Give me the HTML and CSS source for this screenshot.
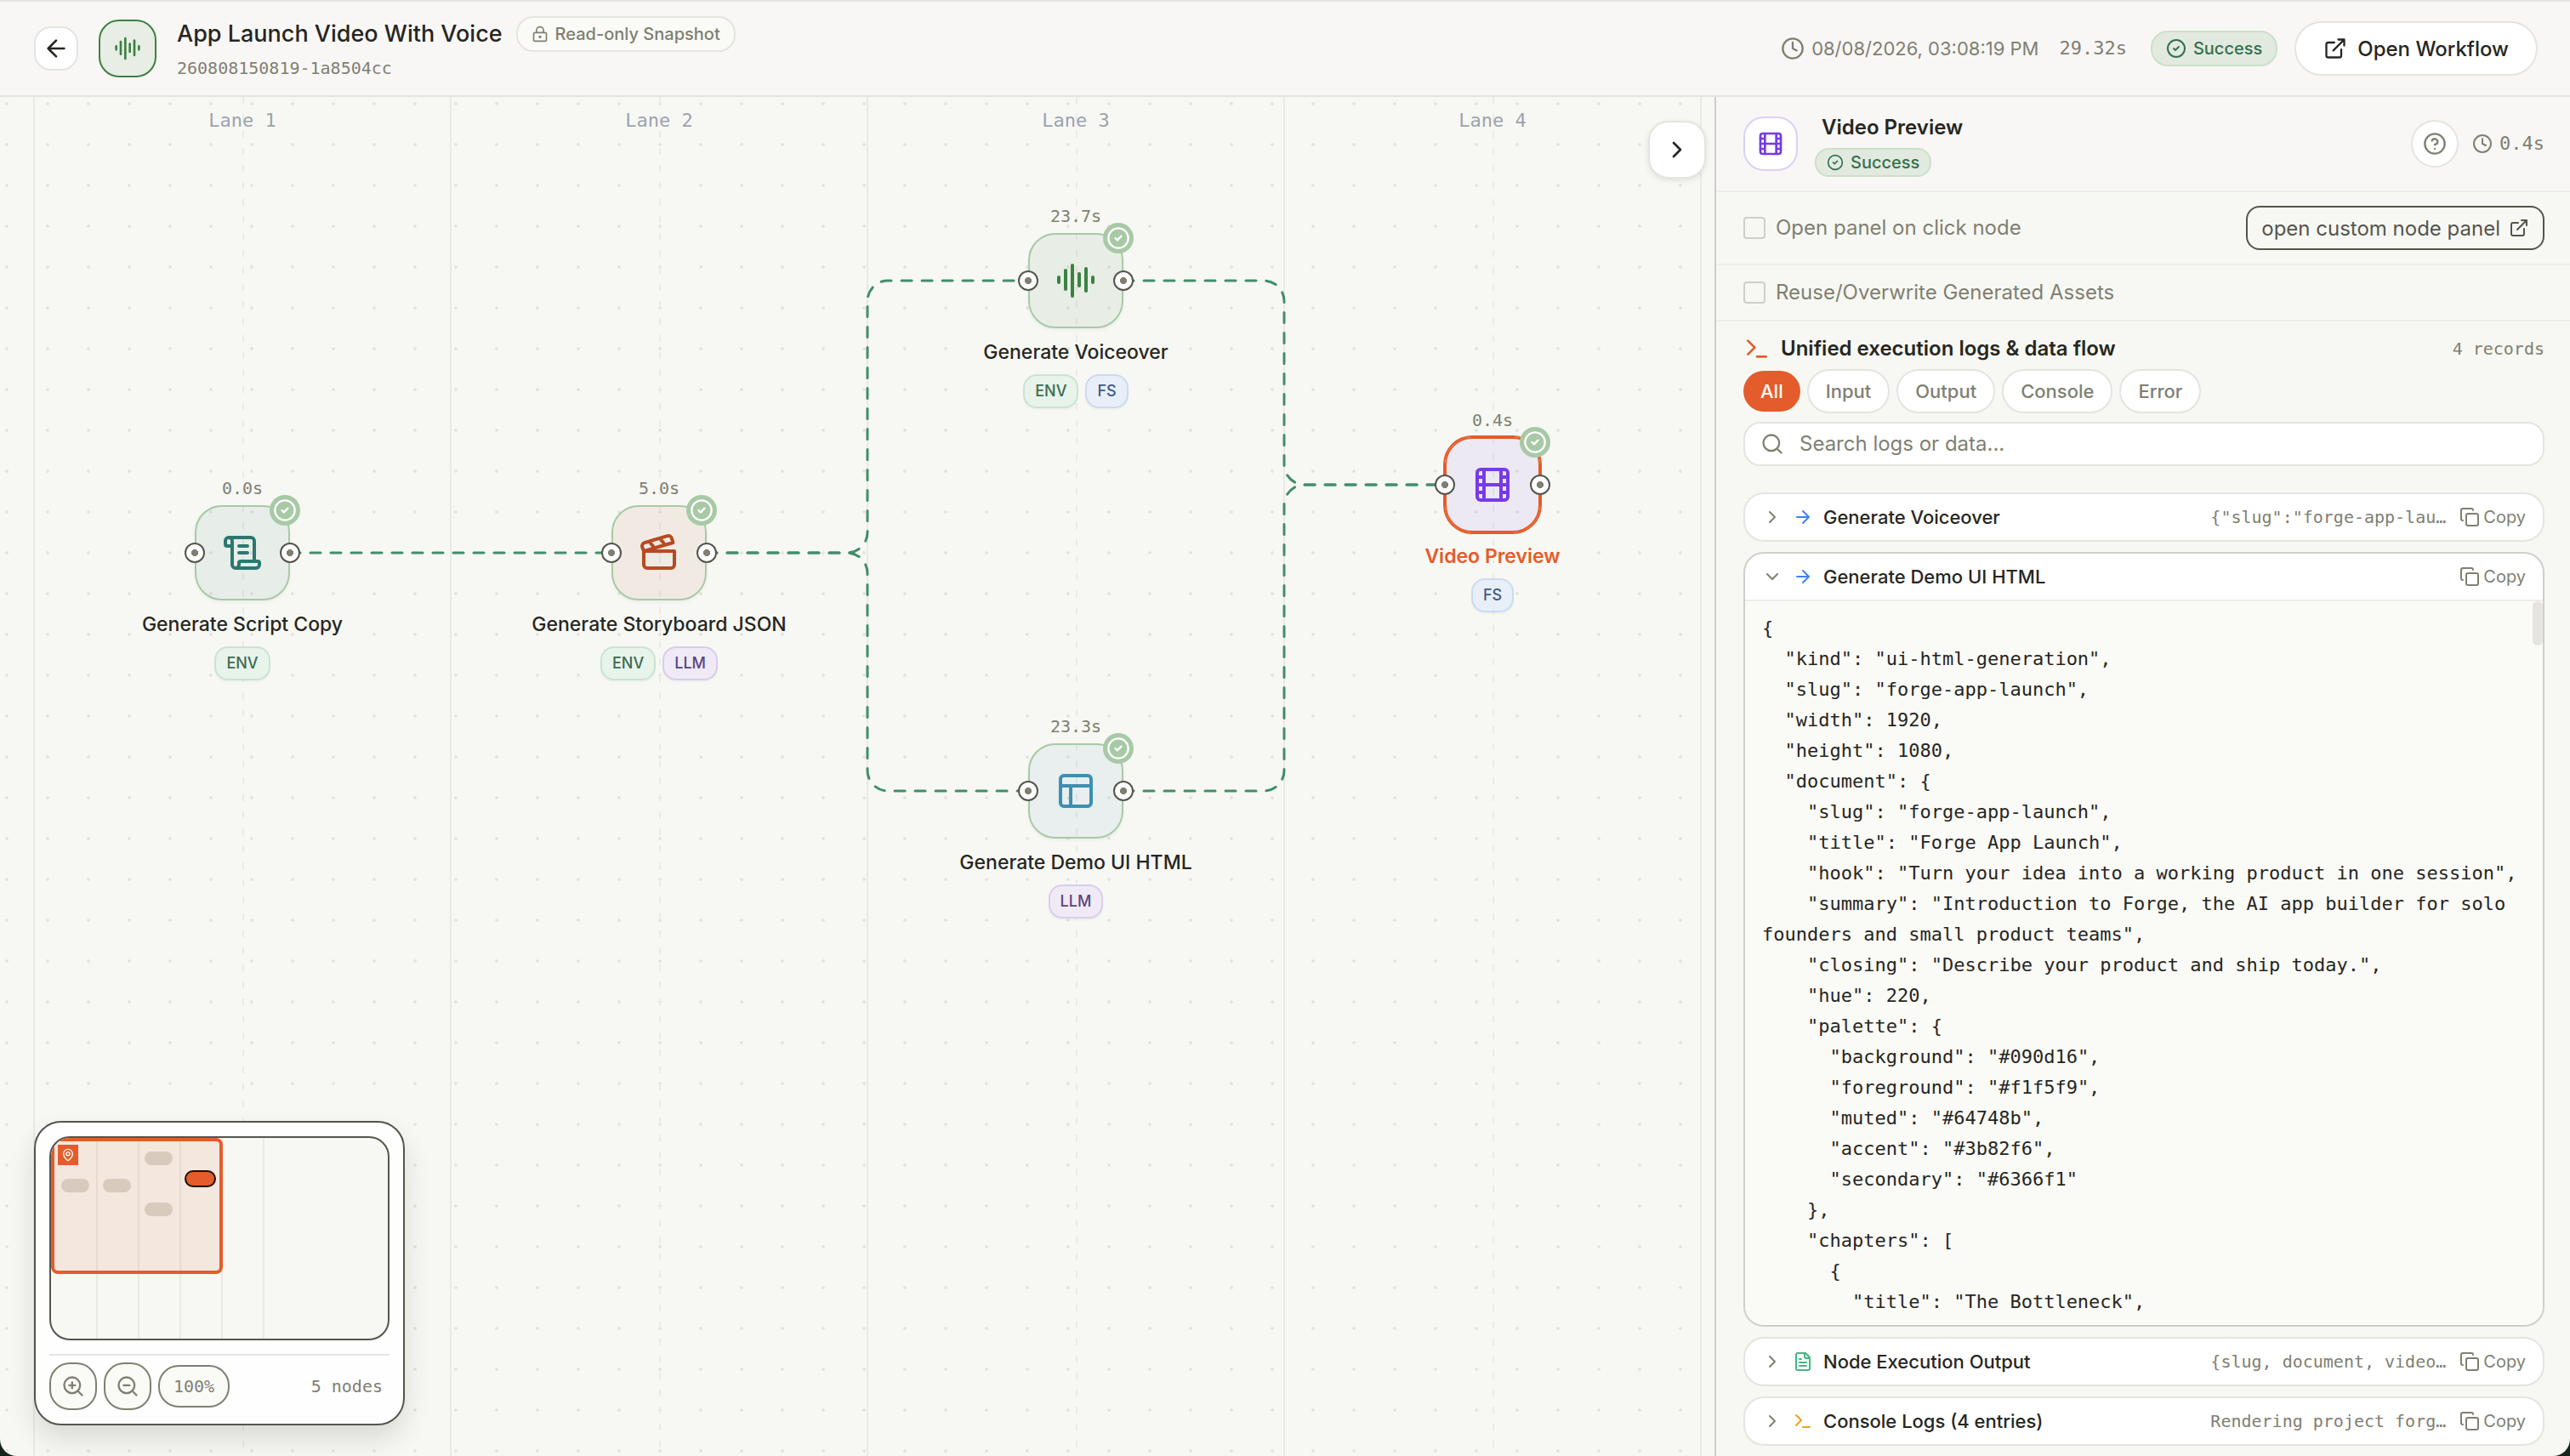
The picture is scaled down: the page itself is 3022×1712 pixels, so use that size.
FILE: index.html
```html
<!DOCTYPE html>
<html lang="en">
<head>
  <meta charset="UTF-8">
  <meta name="viewport" content="width=device-width, initial-scale=1.0">
  <title>App Launch Video With Voice</title>
  <link rel="stylesheet" href="styles.css">
</head>
<body>
    <!-- Shared icons -->
    <svg class="sprite" aria-hidden="true">
        <symbol id="i-back" viewBox="0 0 24 24"><path d="m12 19-7-7 7-7M19 12H5"/></symbol>
        <symbol id="i-wave" viewBox="0 0 24 24"><path d="M2 10v3M6 6v11M10 3v18M14 8v7M18 5v13M22 10v3"/></symbol>
        <symbol id="i-lock" viewBox="0 0 24 24"><circle cx="12" cy="16" r="1"/><rect x="3" y="10" width="18" height="12" rx="2"/><path d="M7 10V7a5 5 0 0 1 10 0v3"/></symbol>
        <symbol id="i-clock" viewBox="0 0 24 24"><circle cx="12" cy="12" r="10"/><path d="M12 6v6l4 2"/></symbol>
        <symbol id="i-check" viewBox="0 0 24 24"><circle cx="12" cy="12" r="10"/><path d="m9 12 2 2 4-4"/></symbol>
        <symbol id="i-open" viewBox="0 0 24 24"><path d="M15 3h6v6M10 14 21 3M18 13v6a2 2 0 0 1-2 2H5a2 2 0 0 1-2-2V8a2 2 0 0 1 2-2h6"/></symbol>
        <symbol id="i-right" viewBox="0 0 24 24"><path d="m9 18 6-6-6-6"/></symbol>
        <symbol id="i-down" viewBox="0 0 24 24"><path d="m6 9 6 6 6-6"/></symbol>
        <symbol id="i-arrow" viewBox="0 0 24 24"><path d="M5 12h14M12 5l7 7-7 7"/></symbol>
        <symbol id="i-film" viewBox="0 0 24 24"><rect x="3" y="3" width="18" height="18" rx="2"/><path d="M7 3v18M3 7.500h4M3 12h18M3 16.500h4M17 3v18M17 7.500h4M17 16.500h4"/></symbol>
        <symbol id="i-scroll" viewBox="0 0 24 24"><path d="M15 12h-5M15 8h-5M19 17V5a2 2 0 0 0-2-2H4"/><path d="M8 21h12a2 2 0 0 0 2-2v-1a1 1 0 0 0-1-1H11a1 1 0 0 0-1 1v1a2 2 0 1 1-4 0V5a2 2 0 1 0-4 0v2a1 1 0 0 0 1 1h3"/></symbol>
        <symbol id="i-clap" viewBox="0 0 24 24"><path d="M20.200 6 3 11l-.9-2.400c-.3-1.100.3-2.200 1.300-2.500l13.500-4c1.100-.3 2.200.3 2.500 1.300ZM6.200 5.300l3.100 3.900M12.400 3.400l3.100 4M3 11h18v8a2 2 0 0 1-2 2H5a2 2 0 0 1-2-2Z"/></symbol>
        <symbol id="i-layout" viewBox="0 0 24 24"><rect x="3" y="3" width="18" height="18" rx="2"/><path d="M3 9h18M9 21V9"/></symbol>
        <symbol id="i-help" viewBox="0 0 24 24"><circle cx="12" cy="12" r="10"/><path d="M9.100 9a3 3 0 0 1 5.800 1c0 2-3 3-3 3M12 17h.01"/></symbol>
        <symbol id="i-term" viewBox="0 0 24 24"><path d="m4 17 6-6-6-6M12 19h8"/></symbol>
        <symbol id="i-search" viewBox="0 0 24 24"><circle cx="11" cy="11" r="8"/><path d="m21 21-4.300-4.300"/></symbol>
        <symbol id="i-copy" viewBox="0 0 24 24"><rect x="8" y="8" width="14" height="14" rx="2"/><path d="M4 16c-1.100 0-2-.9-2-2V4c0-1.100.9-2 2-2h10c1.100 0 2 .9 2 2"/></symbol>
        <symbol id="i-file" viewBox="0 0 24 24"><path d="M15 2H6a2 2 0 0 0-2 2v16a2 2 0 0 0 2 2h12a2 2 0 0 0 2-2V7ZM14 2v4a2 2 0 0 0 2 2h4M10 9H8M16 13H8M16 17H8"/></symbol>
        <symbol id="i-zoomin" viewBox="0 0 24 24"><circle cx="11" cy="11" r="8"/><path d="m21 21-4.300-4.300M11 8v6M8 11h6"/></symbol>
        <symbol id="i-zoomout" viewBox="0 0 24 24"><circle cx="11" cy="11" r="8"/><path d="m21 21-4.300-4.300M8 11h6"/></symbol>
        <symbol id="i-pin" viewBox="0 0 24 24"><path d="M20 10c0 5-5.500 10.200-7.400 11.800a1 1 0 0 1-1.200 0C9.500 20.200 4 15 4 10a8 8 0 0 1 16 0"/><circle cx="12" cy="10" r="3"/></symbol>
    </svg>

    <div class="app">
        <header class="topbar">
            <button class="back" aria-label="Back"><svg class="icon s32"><use href="#i-back"/></svg></button>
            <div class="app-icon"><svg class="icon s32"><use href="#i-wave"/></svg></div>
            <div class="heading">
                <div class="heading-row">
                    <h1>App Launch Video With Voice</h1>
                    <span class="snapshot"><svg class="icon s20"><use href="#i-lock"/></svg>Read-only Snapshot</span>
                </div>
                <div class="run-id">260808150819-1a8504cc</div>
            </div>
            <div class="run-info">
                <span class="run-date"><svg class="icon s28"><use href="#i-clock"/></svg>08/08/2026, 03:08:19 PM</span>
                <span class="mono">29.32s</span>
            </div>
            <span class="status"><svg class="icon s24"><use href="#i-check"/></svg>Success</span>
            <button class="open-workflow"><svg class="icon s28"><use href="#i-open"/></svg>Open Workflow</button>
        </header>

        <div class="main">
            <section class="canvas">
                <div class="lanes">
                    <div class="lane"><span>Lane 1</span></div>
                    <div class="lane"><span>Lane 2</span></div>
                    <div class="lane"><span>Lane 3</span></div>
                    <div class="lane"><span>Lane 4</span></div>
                    <div class="lane"></div>
                </div>

                <svg class="edges" width="2000" height="1200">
                    <path d="M341 536H719"/>
                    <path d="M831 536H996A24 24 0 0 0 1020 512V240A24 24 0 0 1 1044 216H1209"/>
                    <path d="M831 536H996A24 24 0 0 1 1020 560V792A24 24 0 0 0 1044 816H1209"/>
                    <path d="M1321 216H1486A24 24 0 0 1 1510 240V432A24 24 0 0 0 1534 456H1699"/>
                    <path d="M1321 816H1486A24 24 0 0 0 1510 792V480A24 24 0 0 1 1534 456H1699"/>
                </svg>

                <div class="node node-script">
                    <span class="time">0.0s</span>
                    <div class="box"><svg class="icon s48"><use href="#i-scroll"/></svg><i class="port in"></i><i class="port out"></i><span class="done"><svg class="icon s28"><use href="#i-check"/></svg></span></div>
                    <span class="name">Generate Script Copy</span>
                    <div class="tags"><span class="tag env">ENV</span></div>
                </div>
                <div class="node node-story">
                    <span class="time">5.0s</span>
                    <div class="box"><svg class="icon s48"><use href="#i-clap"/></svg><i class="port in"></i><i class="port out"></i><span class="done"><svg class="icon s28"><use href="#i-check"/></svg></span></div>
                    <span class="name">Generate Storyboard JSON</span>
                    <div class="tags"><span class="tag env">ENV</span><span class="tag llm">LLM</span></div>
                </div>
                <div class="node node-voice">
                    <span class="time">23.7s</span>
                    <div class="box"><svg class="icon s48"><use href="#i-wave"/></svg><i class="port in"></i><i class="port out"></i><span class="done"><svg class="icon s28"><use href="#i-check"/></svg></span></div>
                    <span class="name">Generate Voiceover</span>
                    <div class="tags"><span class="tag env">ENV</span><span class="tag fs">FS</span></div>
                </div>
                <div class="node node-html">
                    <span class="time">23.3s</span>
                    <div class="box"><svg class="icon s48"><use href="#i-layout"/></svg><i class="port in"></i><i class="port out"></i><span class="done"><svg class="icon s28"><use href="#i-check"/></svg></span></div>
                    <span class="name">Generate Demo UI HTML</span>
                    <div class="tags"><span class="tag llm">LLM</span></div>
                </div>
                <div class="node node-video selected">
                    <span class="time">0.4s</span>
                    <div class="box"><svg class="icon s48"><use href="#i-film"/></svg><i class="port in"></i><i class="port out"></i><span class="done"><svg class="icon s28"><use href="#i-check"/></svg></span></div>
                    <span class="name">Video Preview</span>
                    <div class="tags"><span class="tag fs">FS</span></div>
                </div>

                <button class="collapse" aria-label="Collapse panel"><svg class="icon s32"><use href="#i-right"/></svg></button>

                <div class="minimap">
                    <div class="map">
                        <svg width="396" height="236">
                            <path class="map-lane" d="M54 0V236M103 0V236M152 0V236M201 0V236M250 0V236"/>
                            <g class="map-node">
                                <rect x="12" y="48" width="33" height="16" rx="8"/>
                                <rect x="61" y="48" width="33" height="16" rx="8"/>
                                <rect x="110" y="16" width="33" height="16" rx="8"/>
                                <rect x="110" y="76" width="33" height="16" rx="8"/>
                            </g>
                            <rect class="map-view" x="2" y="2" width="198" height="156" rx="6"/>
                            <rect class="map-active" x="158" y="39" width="35" height="18" rx="9"/>
                        </svg>
                        <span class="map-pin"><svg class="icon s16"><use href="#i-pin"/></svg></span>
                    </div>
                    <div class="map-tools">
                        <button class="tool" aria-label="Zoom in"><svg class="icon s28"><use href="#i-zoomin"/></svg></button>
                        <button class="tool" aria-label="Zoom out"><svg class="icon s28"><use href="#i-zoomout"/></svg></button>
                        <button class="percent">100%</button>
                        <span class="count">5 nodes</span>
                    </div>
                </div>
            </section>

            <aside class="panel">
                <div class="panel-head">
                    <div class="panel-icon"><svg class="icon s32"><use href="#i-film"/></svg></div>
                    <div class="panel-title">
                        <h2>Video Preview</h2>
                        <span class="status small"><svg class="icon s20"><use href="#i-check"/></svg>Success</span>
                    </div>
                    <button class="help" aria-label="Help"><svg class="icon s28"><use href="#i-help"/></svg></button>
                    <span class="duration"><svg class="icon s24"><use href="#i-clock"/></svg>0.4s</span>
                </div>
                <div class="option">
                    <input type="checkbox" id="open-panel">
                    <label for="open-panel">Open panel on click node</label>
                    <button class="custom-panel">open custom node panel<svg class="icon s24"><use href="#i-open"/></svg></button>
                </div>
                <div class="option">
                    <input type="checkbox" id="reuse-assets">
                    <label for="reuse-assets">Reuse/Overwrite Generated Assets</label>
                </div>

                <div class="logs">
                    <div class="logs-head">
                        <svg class="icon s32"><use href="#i-term"/></svg>
                        <h3>Unified execution logs &amp; data flow</h3>
                        <span class="records">4 records</span>
                    </div>
                    <div class="filters">
                        <button class="active">All</button>
                        <button>Input</button>
                        <button>Output</button>
                        <button>Console</button>
                        <button>Error</button>
                    </div>
                    <div class="search">
                        <svg class="icon s28"><use href="#i-search"/></svg>
                        <input type="text" placeholder="Search logs or data..." aria-label="Search logs or data">
                    </div>

                    <div class="record">
                        <div class="record-head">
                            <svg class="icon s24 chev"><use href="#i-right"/></svg>
                            <svg class="icon s24 blue"><use href="#i-arrow"/></svg>
                            <span class="record-name">Generate Voiceover</span>
                            <span class="preview">{"slug":"forge-app-lau…</span>
                            <button class="copy"><svg class="icon s24"><use href="#i-copy"/></svg>Copy</button>
                        </div>
                    </div>
                    <div class="record open">
                        <div class="record-head">
                            <svg class="icon s24 chev"><use href="#i-down"/></svg>
                            <svg class="icon s24 blue"><use href="#i-arrow"/></svg>
                            <span class="record-name">Generate Demo UI HTML</span>
                            <button class="copy"><svg class="icon s24"><use href="#i-copy"/></svg>Copy</button>
                        </div>
                        <div class="record-body">
<pre>{
  "kind": "ui-html-generation",
  "slug": "forge-app-launch",
  "width": 1920,
  "height": 1080,
  "document": {
    "slug": "forge-app-launch",
    "title": "Forge App Launch",
    "hook": "Turn your idea into a working product in one session",
    "summary": "Introduction to Forge, the AI app builder for solo founders and small product teams",
    "closing": "Describe your product and ship today.",
    "hue": 220,
    "palette": {
      "background": "#090d16",
      "foreground": "#f1f5f9",
      "muted": "#64748b",
      "accent": "#3b82f6",
      "secondary": "#6366f1"
    },
    "chapters": [
      {
        "title": "The Bottleneck",
        "summary": "Ideas are everywhere, shipping is hard",</pre>
                            <span class="thumb"></span>
                        </div>
                    </div>
                    <div class="record">
                        <div class="record-head">
                            <svg class="icon s24 chev"><use href="#i-right"/></svg>
                            <svg class="icon s24 green"><use href="#i-file"/></svg>
                            <span class="record-name">Node Execution Output</span>
                            <span class="preview">{slug, document, video…</span>
                            <button class="copy"><svg class="icon s24"><use href="#i-copy"/></svg>Copy</button>
                        </div>
                    </div>
                    <div class="record">
                        <div class="record-head">
                            <svg class="icon s24 chev"><use href="#i-right"/></svg>
                            <svg class="icon s24 amber"><use href="#i-term"/></svg>
                            <span class="record-name">Console Logs (4 entries)</span>
                            <span class="preview">Rendering project forg…</span>
                            <button class="copy"><svg class="icon s24"><use href="#i-copy"/></svg>Copy</button>
                        </div>
                    </div>
                </div>
            </aside>
        </div>
    </div>
</body>
</html>
```

FILE: styles.css
```css
* {
    box-sizing: border-box;
}

body {
    margin: 0;
    background-color: #15251a;
    color: #262622;
    font-family: Inter, "Liberation Sans", sans-serif;
    font-size: 24px;
    line-height: 32px;
}

h1, h2, h3, pre {
    margin: 0;
}

button {
    display: flex;
    align-items: center;
    justify-content: center;
    padding: 0;
    border: 2px solid #e5e4e0;
    background-color: #fff;
    color: #262622;
    font-family: inherit;
    font-weight: 500;
    cursor: pointer;
}

.sprite {
    display: none;
}

.icon {
    flex: none;
    fill: none;
    stroke: currentColor;
    stroke-width: 2;
    stroke-linecap: round;
    stroke-linejoin: round;
}

.s16 { width: 16px; height: 16px; }
.s20 { width: 20px; height: 20px; }
.s24 { width: 24px; height: 24px; }
.s28 { width: 28px; height: 28px; }
.s32 { width: 32px; height: 32px; }
.s48 { width: 48px; height: 48px; }

.mono, .run-id, .lane, .time, .percent, .count, .duration, .records, .preview, pre {
    font-family: "DejaVu Sans Mono", "Liberation Mono", monospace;
}

.app {
    display: flex;
    flex-direction: column;
    height: 100vh;
    overflow: hidden;
    border-radius: 0 0 20px 20px;
    background-color: #f7f8f3;
}

/* Top bar */
.topbar {
    flex: none;
    display: flex;
    align-items: center;
    height: 114px;
    padding: 0 38px 0 40px;
    border-top: 2px solid #e5e4e0;
    border-bottom: 2px solid #e5e4e0;
    background-color: #f9f7f6;
}

.back {
    width: 52px;
    height: 52px;
    border-radius: 20px;
}

.app-icon {
    display: flex;
    align-items: center;
    justify-content: center;
    width: 68px;
    height: 68px;
    margin: 0 24px;
    border: 2px solid #3b8243;
    border-radius: 24px;
    background-color: #e8ede6;
    color: #3b8243;
}

.heading {
    padding-top: 2px;
}

.heading-row {
    display: flex;
    align-items: center;
    gap: 16px;
    height: 44px;
}

h1 {
    font-size: 27px;
    font-weight: 500;
}

.snapshot {
    display: flex;
    align-items: center;
    gap: 8px;
    height: 42px;
    padding: 0 16px;
    border: 2px solid #e5e4e0;
    border-radius: 20px;
    background-color: #fafaf6;
    color: #807f72;
    font-size: 20px;
    font-weight: 500;
}

.run-id {
    color: #807f72;
    font-size: 20px;
    line-height: 36px;
}

.run-info {
    display: flex;
    align-items: center;
    gap: 24px;
    margin-left: auto;
    color: #807f72;
    font-size: 22px;
}

.run-date {
    display: flex;
    align-items: center;
    gap: 8px;
}

.status {
    display: flex;
    align-items: center;
    gap: 8px;
    height: 42px;
    margin: 0 20px 0 28px;
    padding: 0 16px;
    border: 2px solid #cce0c9;
    border-radius: 20px;
    background-color: #e2eadf;
    color: #35704f;
    font-size: 20px;
    font-weight: 500;
}

.status.small {
    height: 34px;
    margin: 0;
    padding: 0 12px;
    border-radius: 16px;
}

.open-workflow {
    gap: 12px;
    height: 64px;
    padding: 0 32px;
    border-radius: 32px;
    font-size: 24px;
}

.main {
    flex: 1;
    display: flex;
    min-height: 0;
}

/* Workflow canvas */
.canvas {
    position: relative;
    flex: 1;
    overflow: hidden;
    background-image: radial-gradient(circle, #e5e5e0 2px, transparent 2px);
    background-position: -16px -16px;
    background-size: 48px 48px;
}

.lanes {
    display: flex;
    height: 100%;
    padding-left: 39px;
}

.lane {
    flex: none;
    width: 490px;
    padding-top: 12px;
    border-left: 2px solid #e9e9e5;
    background: repeating-linear-gradient(#eaeae6 0 8px, transparent 8px 20px) 244px 0 / 2px 100% no-repeat;
    color: #9ca3af;
    font-size: 22px;
    text-align: center;
}

.edges {
    position: absolute;
    top: 0;
    left: 0;
    fill: none;
    stroke: #438d6a;
    stroke-width: 3;
    stroke-linecap: round;
    stroke-dasharray: 12 12;
}

.node {
    position: absolute;
    display: flex;
    flex-direction: column;
    align-items: center;
    width: 400px;
}

.node-script { left: 85px; top: 444px; }
.node-story { left: 575px; top: 444px; }
.node-voice { left: 1065px; top: 124px; }
.node-html { left: 1065px; top: 724px; }
.node-video { left: 1555px; top: 364px; }

.time {
    height: 36px;
    color: #807f72;
    font-size: 20px;
}

.box {
    position: relative;
    display: flex;
    align-items: center;
    justify-content: center;
    width: 112px;
    height: 112px;
    border: 2px solid #a8c9a6;
    border-radius: 32px;
    box-shadow: 0 2px 4px rgba(0, 0, 0, 0.05);
}

.node-script .box { background-color: rgba(45, 119, 112, 0.08); color: #2d7770; }
.node-story .box { background-color: rgba(183, 74, 34, 0.08); color: #b74a22; }
.node-voice .box { background-color: rgba(59, 130, 67, 0.08); color: #3b8243; }
.node-html .box { background-color: rgba(61, 143, 179, 0.08); color: #3d8fb3; }
.node-video .box { background-color: rgba(118, 59, 232, 0.08); color: #763be8; }

.selected .box {
    border-color: #e45c2b;
    box-shadow: 0 0 0 2px #e45c2b;
}

.port {
    position: absolute;
    top: 42px;
    width: 24px;
    height: 24px;
    border: 2px solid #55554d;
    border-radius: 50%;
    background: radial-gradient(circle, #807f72 4px, #fff 4px);
}

.port.in { left: -14px; }
.port.out { right: -14px; }

.done {
    position: absolute;
    top: -14px;
    right: -14px;
    display: flex;
    align-items: center;
    justify-content: center;
    width: 36px;
    height: 36px;
    border-radius: 50%;
    background-color: #a8c9a6;
    color: #fff;
}

.name {
    margin-top: 12px;
    font-size: 23px;
    font-weight: 500;
}

.selected .name {
    color: #e45c2b;
    font-weight: 600;
}

.tags {
    display: flex;
    gap: 8px;
    margin-top: 10px;
}

.tag {
    padding: 0 12px;
    border: 2px solid;
    border-radius: 16px;
    box-shadow: 0 2px 2px rgba(0, 0, 0, 0.04);
    font-size: 18px;
    font-weight: 500;
    line-height: 36px;
}

.tag.env { border-color: #c8e4d4; background-color: #e8f3ea; color: #3d6b52; }
.tag.fs { border-color: #ccdaf0; background-color: #e8eff8; color: #3f5985; }
.tag.llm { border-color: #d9cdec; background-color: #f0eaf6; color: #5b4480; }

.collapse {
    position: absolute;
    top: 28px;
    right: 10px;
    width: 68px;
    height: 68px;
    border-radius: 24px;
    box-shadow: 0 2px 6px rgba(0, 0, 0, 0.1);
}

/* Minimap */
.minimap {
    position: absolute;
    left: 40px;
    bottom: 36px;
    width: 436px;
    padding: 16px;
    border: 2px solid #55554d;
    border-radius: 32px;
    background-color: #fefefe;
    box-shadow: 0 16px 32px rgba(0, 0, 0, 0.12);
}

.map {
    position: relative;
    height: 240px;
    overflow: hidden;
    border: 2px solid #55554d;
    border-radius: 24px;
    background-color: #f7f8f3;
}

.map-lane { stroke: #e9e9e5; stroke-width: 2; }
.map-node { fill: #d7d7ce; }
.map-view { fill: rgba(228, 92, 43, 0.1); stroke: #e45c2b; stroke-width: 4; }
.map-active { fill: #e45c2b; stroke: #1a0d08; stroke-width: 2; }

.map-pin {
    position: absolute;
    top: 8px;
    left: 8px;
    display: flex;
    align-items: center;
    justify-content: center;
    width: 24px;
    height: 24px;
    background-color: #e45c2b;
    color: #fff;
}

.map-tools {
    display: flex;
    align-items: center;
    gap: 8px;
    margin-top: 16px;
    padding-top: 8px;
    border-top: 2px solid #e5e4e0;
}

.tool, .percent {
    border-color: #807f72;
    border-radius: 24px;
    background-color: #fafaf6;
    color: #807f72;
}

.tool {
    width: 56px;
    height: 56px;
}

.percent {
    width: 84px;
    height: 50px;
    font-size: 20px;
    font-weight: 400;
}

.count {
    margin-left: auto;
    padding-right: 8px;
    color: #807f72;
    font-size: 20px;
}

/* Side panel */
.panel {
    flex: none;
    display: flex;
    flex-direction: column;
    width: 1006px;
    border-left: 2px solid #cfcec9;
}

.panel-head {
    display: flex;
    align-items: center;
    height: 112px;
    padding: 0 30px 0 32px;
    border-bottom: 2px solid #eeede9;
    background-color: #f9f7f6;
}

.panel-icon {
    display: flex;
    align-items: center;
    justify-content: center;
    width: 64px;
    height: 64px;
    margin-right: 20px;
    border: 2px solid #dccffa;
    border-radius: 24px;
    background-color: #fff;
    color: #763be8;
}

.panel-title {
    display: flex;
    flex-direction: column;
    align-items: flex-start;
    gap: 8px;
    padding-top: 4px;
}

h2 {
    padding-left: 8px;
    font-size: 24px;
    font-weight: 600;
}

.help {
    width: 56px;
    height: 56px;
    margin-left: auto;
    border-radius: 28px;
    color: #807f72;
}

.duration {
    display: flex;
    align-items: center;
    gap: 8px;
    margin-left: 16px;
    color: #807f72;
    font-size: 22px;
}

.option {
    display: flex;
    align-items: center;
    gap: 12px;
    padding: 16px 30px 16px 32px;
    border-bottom: 2px solid #eeede9;
    color: #807f72;
}

.option input {
    appearance: none;
    width: 26px;
    height: 26px;
    margin: 0;
    border: 2px solid #cfcec9;
    border-radius: 4px;
}

.custom-panel {
    gap: 10px;
    height: 52px;
    margin-left: auto;
    padding: 0 16px;
    border-color: #55554d;
    border-radius: 16px;
    background-color: transparent;
    color: #55554d;
    font-size: 24px;
    font-weight: 400;
}

.logs {
    flex: 1;
    display: flex;
    flex-direction: column;
    min-height: 0;
    padding: 12px 30px 12px 32px;
}

.logs-head {
    display: flex;
    align-items: center;
    height: 40px;
    color: #e45c2b;
}

h3 {
    margin-left: 12px;
    color: #262622;
    font-size: 24px;
    font-weight: 600;
}

.records {
    margin-left: auto;
    color: #807f72;
    font-size: 20px;
}

.filters {
    display: flex;
    align-items: center;
    gap: 8px;
    margin-top: 4px;
}

.filters button {
    height: 52px;
    padding: 0 20px;
    border-radius: 26px;
    color: #807f72;
    font-size: 22px;
}

.filters .active {
    height: 48px;
    border: 0;
    background-color: #e45c2b;
    color: #fff;
}

.search {
    display: flex;
    align-items: center;
    gap: 18px;
    height: 52px;
    margin: 10px 0 31px;
    padding: 0 18px;
    border: 2px solid #e5e4e0;
    border-radius: 20px;
    background-color: #fff;
    color: #807f72;
}

.search input {
    flex: 1;
    padding: 0;
    border: 0;
    outline: 0;
    background: none;
    font: inherit;
}

.search input::placeholder {
    color: #807f72;
    opacity: 1;
}

.record {
    flex: none;
    overflow: hidden;
    border: 2px solid #e5e4e0;
    border-radius: 24px;
    background-color: #fff;
}

.record + .record {
    margin-top: 12px;
}

.record.open {
    flex: 1;
    display: flex;
    flex-direction: column;
    min-height: 0;
    border-color: #cfcec9;
}

.record-head {
    flex: none;
    display: flex;
    align-items: center;
    gap: 12px;
    height: 54px;
    padding: 0 20px;
    font-size: 22px;
}

.chev { color: #807f72; }
.blue { color: #4080f7; }
.green { color: #42b883; }
.amber { color: #f0a020; }

.record-name {
    font-weight: 500;
}

.preview {
    margin: 0 4px 0 auto;
    color: #807f72;
    font-size: 20px;
}

.copy {
    gap: 4px;
    border: 0;
    background: none;
    color: #807f72;
    font-size: 20px;
    font-weight: 400;
}

.open .copy {
    margin-left: auto;
}

.record-body {
    flex: 1;
    position: relative;
    min-height: 0;
    overflow: hidden;
    padding: 14px 16px 0 20px;
    border-top: 2px solid #eeede9;
    background-color: #fafaf6;
}

pre {
    font-size: 22px;
    line-height: 36px;
    white-space: pre-wrap;
}

.thumb {
    position: absolute;
    top: 0;
    right: 0;
    width: 12px;
    height: 52px;
    border-radius: 6px;
    background-color: #e5e4e0;
}
```
